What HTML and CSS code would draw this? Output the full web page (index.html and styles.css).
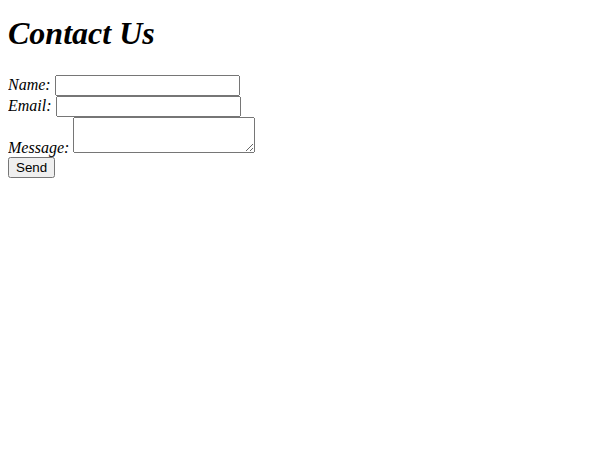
FILE: index.html
```html
<!DOCTYPE html>
<html>
<head>
<meta charset="utf-8">
<title>Contact Us</title>
<link rel="stylesheet" href="styles.css">
</head>
<body class="page">
<h1 class="title">Contact Us</h1>
<form class="contact-form">
<label for="name">Name:</label> <input type="text" id="name" name="name"><br>
<label for="email">Email:</label> <input type="email" id="email" name="email"><br>
<label for="message">Message:</label> <textarea id="message" name="message"></textarea><br>
<button type="submit" class="send">Send</button>
</form>
</body>
</html>
```

FILE: styles.css
```css
.page {
  font-family: "Liberation Serif", serif;
  font-style: italic;
}
.title {
  font-style: italic;
  margin-top: 7px;
  margin-bottom: 22.9px;
}
```
